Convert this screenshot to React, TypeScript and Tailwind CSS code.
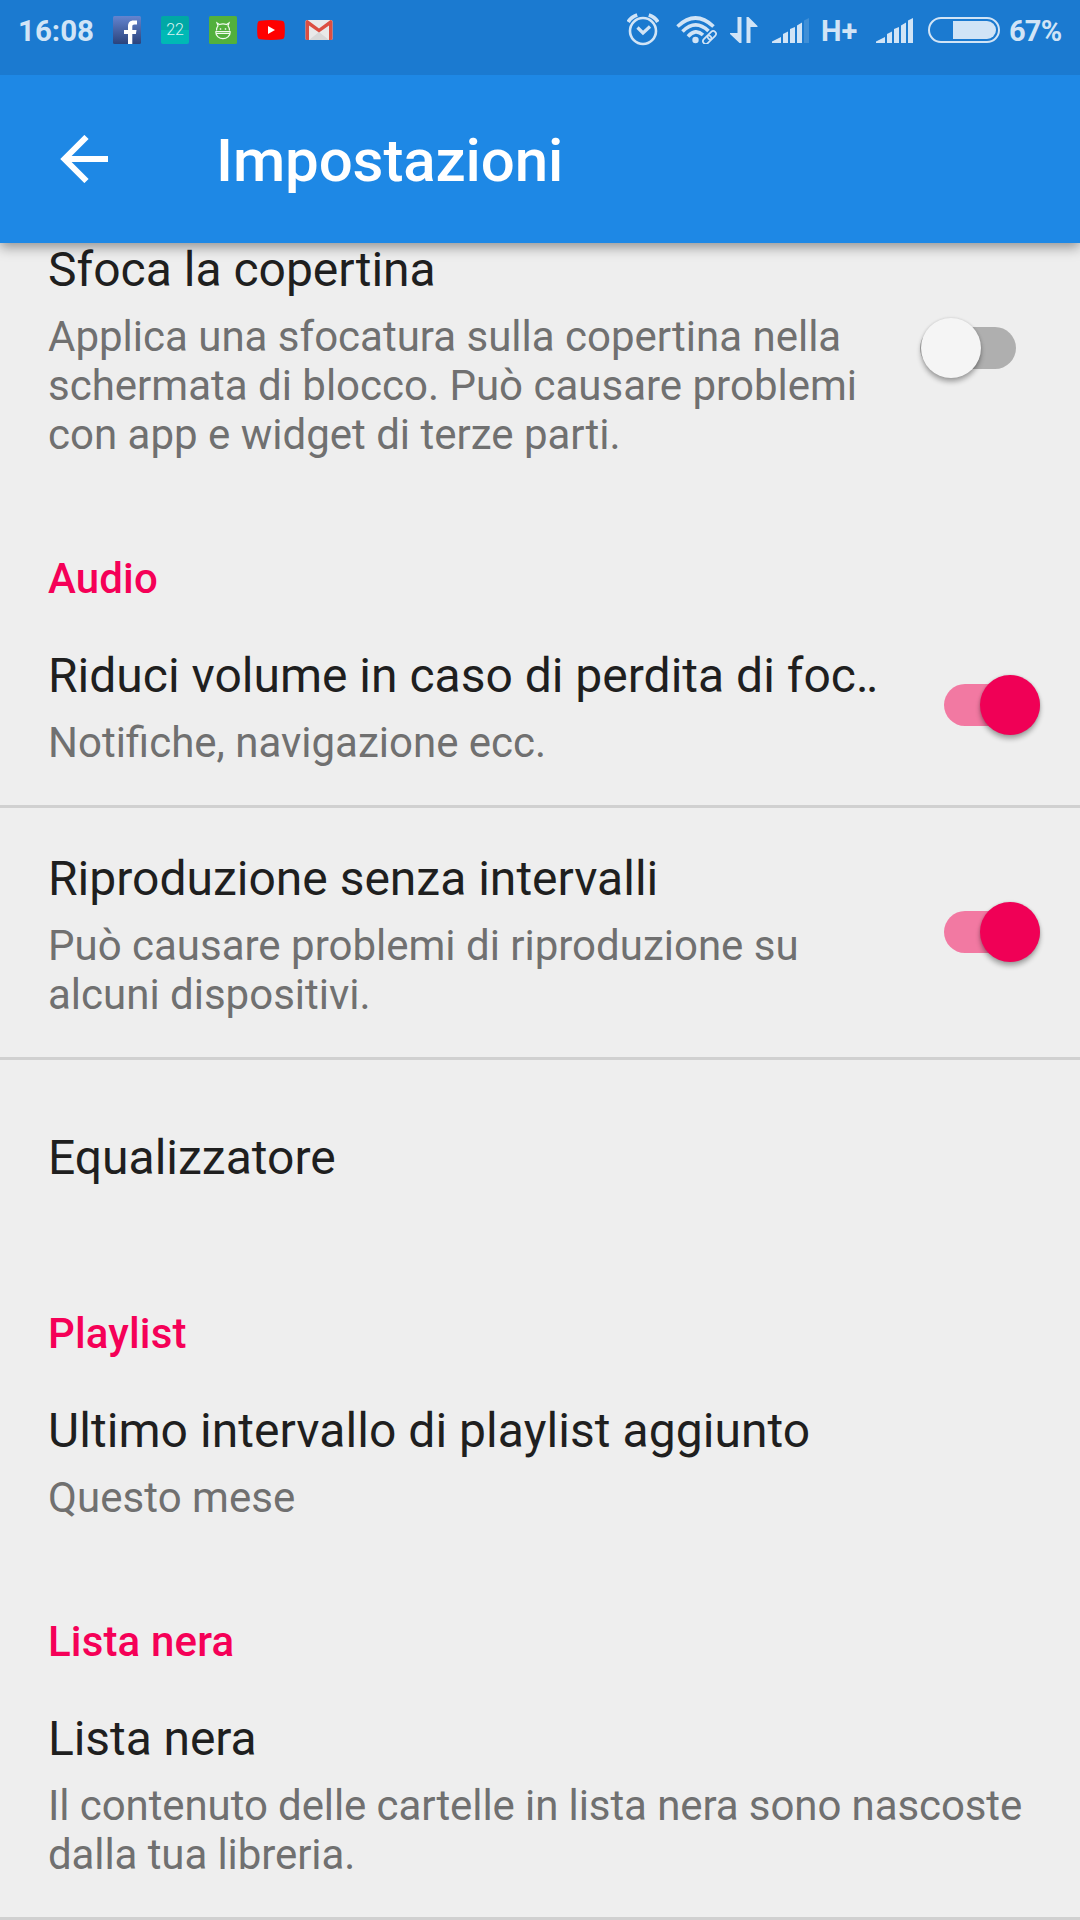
import type { ReactNode } from "react";

type SwitchProps = {
  on: boolean;
};

function Switch({ on }: SwitchProps) {
  if (on) {
    return (
      <div className="mr-10 flex h-[42px] w-24 shrink-0 items-center justify-end rounded-full bg-[#f279a2]">
        <div className="mr-[0.5px] size-[60px] shrink-0 rounded-full bg-[#f00056] shadow-[0_4px_5px_rgba(0,0,0,0.3),0_0_3px_rgba(0,0,0,0.15)]" />
      </div>
    );
  }

  return (
    <div className="mr-16 flex h-[42px] w-24 shrink-0 items-center rounded-full bg-[#afafaf]">
      <div className="ml-[0.5px] size-[60px] shrink-0 rounded-full bg-[#f5f5f5] shadow-[0_4px_5px_rgba(0,0,0,0.3),0_0_3px_rgba(0,0,0,0.15)]" />
    </div>
  );
}

type RowProps = {
  title: ReactNode;
  lines: string[];
  divider?: boolean;
  className?: string;
  children?: ReactNode;
};

function Row({ title, lines, divider, className = "", children }: RowProps) {
  return (
    <>
      <div className={`flex items-center justify-between ${className}`}>
        <div className="pt-[43px] pb-[38px] pl-12">
          <h3 className="text-[48px] leading-[57px] whitespace-nowrap text-[#1f1f1f]">
            {title}
          </h3>
          <p className="mt-[14px] text-[42px] leading-[49px] whitespace-nowrap text-[#707070]">
            {lines.map((line) => (
              <span key={line} className="block">
                {line}
              </span>
            ))}
          </p>
        </div>
        {children}
      </div>
      {divider && <div className="-mb-px h-[3px] bg-[#d0d0d0]" />}
    </>
  );
}

function Category({ name }: { name: string }) {
  return (
    <h2 className="pt-[57px] pb-px pl-12 text-[42px] leading-[49px] font-medium tracking-[0.15px] text-[#f50057]">
      {name}
    </h2>
  );
}

function Signal({ weak }: { weak?: boolean }) {
  return (
    <svg className="h-[26px] w-[38px]" viewBox="0 0 38 26" fill="currentColor">
      <path d="M0 25v-1.5L9 19v6z" />
      <path d="M11 25V16l5-2.500V25z" />
      <path d="M18 25V11l5-2v16z" />
      <path d="M25 25V7.500L30 4.500V25z" />
      <path d="M32 25V2.500L37 0v25z" opacity={weak ? 0.2 : 1} />
    </svg>
  );
}

function StatusBar() {
  return (
    <div className="flex h-[75px] items-start bg-[#1b7ad0] text-[#d1e4f6]">
      <span className="ml-[18px] w-[94px] pt-[13px] text-[29.500px] leading-9 font-bold">
        16:08
      </span>

      <svg className="mt-4 ml-px size-7" viewBox="0 0 28 28">
        <defs>
          <linearGradient id="fb" x1="0" y1="0" x2="0" y2="1">
            <stop offset="0" stopColor="#6484cf" />
            <stop offset="1" stopColor="#2a437c" />
          </linearGradient>
        </defs>
        <rect width="28" height="28" rx="1.500" fill="url(#fb)" />
        <path
          d="M15 28V18h-4v-4h4v-3.500C15 6.500 17 4.500 20.500 4.500H24v4h-2.500c-1.700 0-2.200.7-2.200 2.200V14H23.500l-.6 4h-3.600v10z"
          fill="#fff"
        />
      </svg>

      <div className="mt-4 ml-5 flex size-7 items-center justify-center rounded-xs bg-linear-to-b from-[#00a8a5] from-50% to-[#00b9b5] to-50% text-[16px] leading-none font-light text-[#d8f3f2]">
        22
      </div>

      <svg className="mt-4 ml-5 size-7" viewBox="0 0 28 28" fill="none">
        <rect width="28" height="28" rx="1.500" fill="#52b03c" />
        <path
          d="M7.500 14.500Q7.500 11.500 9 9.800L8 7l2.500 1.500Q14 7.300 17.500 8.500L20 7l-1 2.800q1.500 1.700 1.500 4.700M6.500 15.500h15M7 17.300h14M6.700 15.500C6.700 25 21.300 25 21.300 15.500"
          stroke="#f1faef"
          strokeWidth="1.200"
        />
        <path d="M11.500 12.300v1.400M16.500 12.300v1.400" stroke="#f1faef" strokeWidth="1.400" />
      </svg>

      <svg className="mt-5 ml-5 h-5 w-7" viewBox="0 0 28 20">
        <path
          d="M3 .7Q14-.7 25 .7 27.300 1 27.500 3.500 28.200 10 27.500 16.500 27.300 19 25 19.300 14 20.700 3 19.300.7 19 .5 16.500-.2 10 .5 3.500.7 1 3 .7z"
          fill="#f00"
        />
        <path d="M11 6v8l7-4z" fill="#fff" />
      </svg>

      <svg className="mt-5 ml-5 h-5 w-7" viewBox="0 0 28 20">
        <rect x="0.500" width="27" height="20" rx="1.500" fill="#e9e9e9" />
        <path d="M4 20l10-8 10 8z" fill="#d8d8d8" />
        <path
          d="M.5 1.500Q.5 0 2.500 0L14 8.500 25.500 0q2 0 2 1.500v17q0 1.500-1.500 1.500h-2V5.500L14 12.500 4 5.500V20H2Q.5 20 .5 18.500z"
          fill="#dc4e41"
        />
      </svg>

      {/* alarm */}
      <svg
        className="mt-3 ml-[294px] h-[34px] w-[32px]"
        viewBox="0 0 32 34"
        fill="none"
        stroke="currentColor"
      >
        <circle cx="16" cy="19" r="13" strokeWidth="2.600" />
        <path d="M10.500 15.500l5.500 5.500 7-6.500" strokeWidth="3.200" />
        <path d="M1.200 10Q4 5 10.200 3M30.800 10Q28 5 21.800 3" strokeWidth="3.800" />
      </svg>

      {/* wifi with link */}
      <svg
        className="mt-4 ml-[17px] h-7 w-[42px]"
        viewBox="0 0 42 28"
        fill="none"
        stroke="currentColor"
      >
        <path d="M1.500 10.500Q19.500-6.500 37.500 10.500" strokeWidth="3.600" />
        <path d="M6.500 15.500Q19.500 2.500 32.500 15" strokeWidth="3.600" />
        <path d="M12 20.500Q19.500 12 27 19" strokeWidth="3.600" />
        <circle cx="19.500" cy="24" r="3.200" fill="currentColor" stroke="none" />
        <g transform="rotate(-45 33.500 21.500)" strokeWidth="1.700">
          <rect x="25.500" y="18.700" width="9.500" height="5.600" rx="2.800" />
          <rect x="32" y="18.700" width="9.500" height="5.600" rx="2.800" />
        </g>
      </svg>

      <svg
        className="mt-[17px] ml-[12px] h-[26px] w-7"
        viewBox="0 0 28 26"
        fill="currentColor"
      >
        <path d="M7.500 0h4v26h-2L0 17v-1h7.500z" />
        <path d="M16.500 26h4V10H27.500V9L18.500 0h-2z" />
      </svg>

      <div className="mt-[18px] ml-[14px]">
        <Signal weak />
      </div>
      <span className="ml-[11px] w-[38px] pt-[13px] text-[29px] leading-9 font-bold">
        H+
      </span>
      <div className="mt-[18px] ml-[17px]">
        <Signal />
      </div>

      <svg className="mt-[17px] ml-[14px] h-[26px] w-[72px]" viewBox="0 0 72 26">
        <rect
          x="1"
          y="1"
          width="70"
          height="24"
          rx="12"
          fill="none"
          stroke="currentColor"
          strokeWidth="2"
        />
        <path d="M25 4h34a9 9 0 0 1 0 18H25z" fill="currentColor" />
      </svg>
      <span className="ml-[9px] pt-[13px] text-[29px] leading-9 font-bold tracking-[-0.8px]">
        67%
      </span>
    </div>
  );
}

export default function App() {
  return (
    <main className="h-[1920px] w-[1080px] overflow-hidden bg-[#eeeeee] font-[Roboto,sans-serif]">
      <header className="relative z-10 shadow-[0_4px_12px_rgba(0,0,0,0.4)]">
        <StatusBar />
        <div className="flex h-[168px] items-center bg-[#1e88e5] text-white">
          <svg
            className="ml-[60px] size-12"
            viewBox="0 0 48 48"
            fill="none"
            stroke="currentColor"
            strokeWidth="6"
          >
            <path d="M48 24H5M26.500 2L4.500 24l22 22" />
          </svg>
          <h1 className="ml-[108px] pt-1 text-[60px] leading-[70px] font-medium tracking-[-0.1px]">
            Impostazioni
          </h1>
        </div>
      </header>

      {/* the list is scrolled a little under the header */}
      <section className="-mt-[45px]">
        <Row
          title="Sfoca la copertina"
          lines={[
            "Applica una sfocatura sulla copertina nella",
            "schermata di blocco. Può causare problemi",
            "con app e widget di terze parti.",
          ]}
        >
          <Switch on={false} />
        </Row>

        <Category name="Audio" />
        <Row
          title={
            <>
              Riduci volume in caso di perdita di foc
              <span className="tracking-[-2.5px]">..</span>
            </>
          }
          lines={["Notifiche, navigazione ecc."]}
          divider
        >
          <Switch on />
        </Row>
        <Row
          title="Riproduzione senza intervalli"
          lines={[
            "Può causare problemi di riproduzione su",
            "alcuni dispositivi.",
          ]}
          divider
        >
          <Switch on />
        </Row>
        <h3 className="h-[193px] pt-[70px] pl-12 text-[48px] leading-[57px] text-[#1f1f1f]">
          Equalizzatore
        </h3>

        <Category name="Playlist" />
        <Row
          title="Ultimo intervallo di playlist aggiunto"
          lines={["Questo mese"]}
          className="tracking-[0.06px]"
        />

        <Category name="Lista nera" />
        <Row
          title="Lista nera"
          lines={[
            "Il contenuto delle cartelle in lista nera sono nascoste",
            "dalla tua libreria.",
          ]}
          className="tracking-[-0.09px]"
          divider
        />
      </section>
    </main>
  );
}
